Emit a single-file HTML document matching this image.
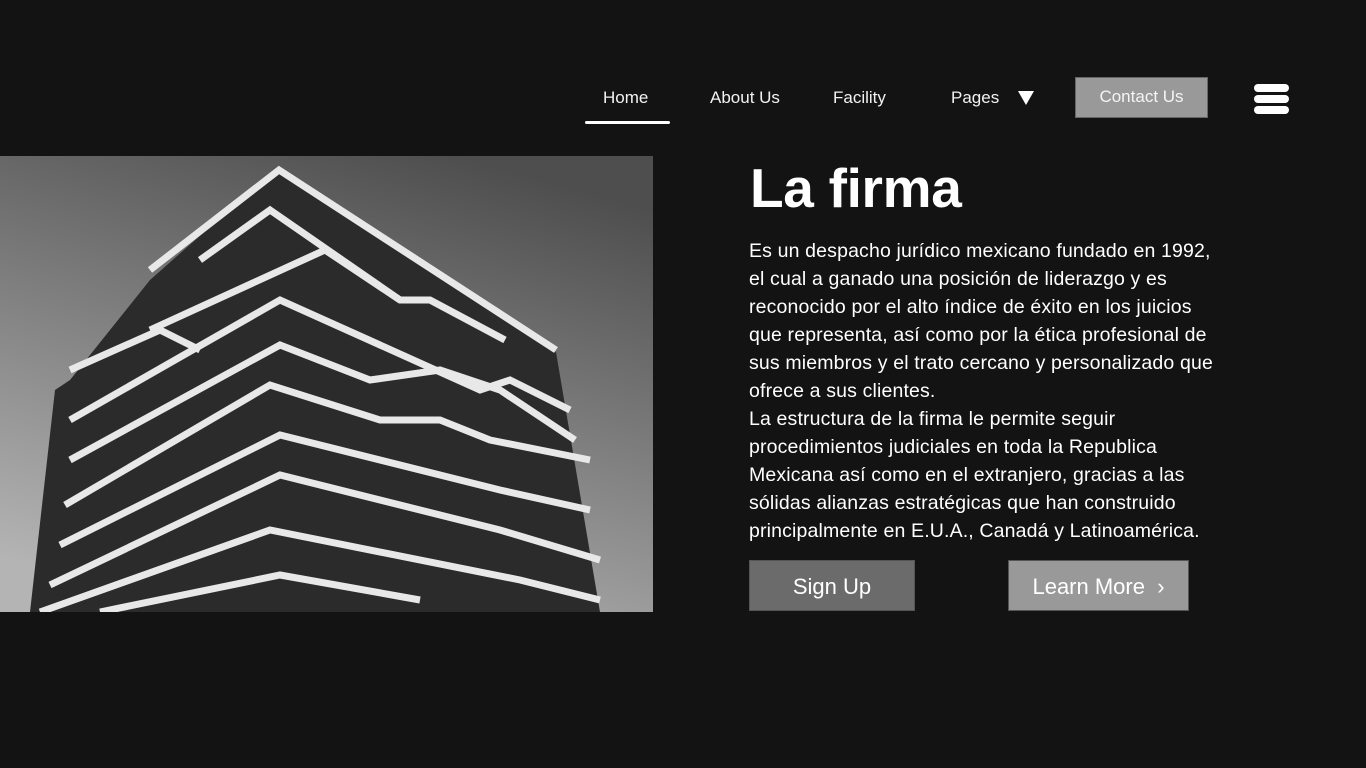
<!DOCTYPE html>
<html><head><meta charset="utf-8"><style>
body{margin:0;width:1366px;height:768px;background:#131313;overflow:hidden;font-family:"Liberation Sans",sans-serif;color:#fff;position:relative}
.nav{position:absolute;top:88px;font-size:17px;color:#f2f2f2}
.ul{position:absolute;left:585px;top:121px;width:85px;height:3px;background:#fff;border-radius:2px}
.contact{position:absolute;left:1075px;top:77px;width:133px;height:41px;background:#999;border:1px solid #666;box-sizing:border-box;font-size:17px;text-align:center;line-height:38px;color:#f4f4f4}
.burger span{position:absolute;left:1254px;width:35px;height:8px;background:#fff;border-radius:4px}
h1{position:absolute;left:750px;top:156px;margin:0;font-size:55px;font-weight:bold;letter-spacing:-0.3px}
.p{position:absolute;left:749px;top:237px;width:520px;font-size:19.5px;line-height:28px;letter-spacing:0.15px;white-space:nowrap}
.btn{position:absolute;top:560px;height:51px;font-size:22px;text-align:center;line-height:51px;box-sizing:border-box;border:1px solid #555}
</style></head><body>
<div class="nav" style="left:603px">Home</div>
<div class="nav" style="left:710px">About Us</div>
<div class="nav" style="left:833px">Facility</div>
<div class="nav" style="left:951px">Pages</div>
<svg style="position:absolute;left:1018px;top:91px" width="16" height="14"><polygon points="0,0 16,0 8,14" fill="#fff"/></svg>
<div class="ul"></div>
<div class="contact">Contact Us</div>
<div class="burger"><span style="top:84px"></span><span style="top:95px"></span><span style="top:106px"></span></div>
<svg style="position:absolute;left:0;top:156px" width="653" height="456" viewBox="0 156 653 456">
<defs><linearGradient id="g" x1="0.7" y1="0" x2="0.3" y2="1"><stop offset="0" stop-color="#4e4e4e"/><stop offset="1" stop-color="#b4b4b4"/></linearGradient></defs>
<rect x="0" y="156" width="653" height="456" fill="url(#g)"/>
<polygon points="279,166 556,352 600,612 30,612 55,390 70,380 150,280" fill="#2b2b2b"/>
<g fill="none" stroke="#e8e8e8" stroke-width="7">
<polyline points="150,270 279,170 556,350"/>
<polyline points="200,260 270,210 400,300"/>
<polyline points="70,370 160,330 200,350"/>
<polyline points="150,330 325,250 400,300 430,300 505,340"/>
<polyline points="70,420 280,300 480,390 510,380 570,410"/>
<polyline points="70,460 280,345 370,380 440,370 500,390 575,440"/>
<polyline points="65,505 270,385 380,420 440,420 490,440 590,460"/>
<polyline points="60,545 280,435 500,490 590,510"/>
<polyline points="50,585 280,475 500,530 600,560"/>
<polyline points="40,612 270,530 520,580 600,600"/>
<polyline points="100,612 280,575 420,600"/>
</g>
</svg>
<h1>La firma</h1>
<div class="p">Es un despacho jurídico mexicano fundado en 1992,<br>el cual a ganado una posición de liderazgo y es<br>reconocido por el alto índice de éxito en los juicios<br>que representa, así como por la ética profesional de<br>sus miembros y el trato cercano y personalizado que<br>ofrece a sus clientes.<br>La estructura de la firma le permite seguir<br>procedimientos judiciales en toda la Republica<br>Mexicana así como en el extranjero, gracias a las<br>sólidas alianzas estratégicas que han construido<br>principalmente en E.U.A., Canadá y Latinoamérica.</div>
<div class="btn" style="left:749px;width:166px;background:#6b6b6b">Sign Up</div>
<div class="btn" style="left:1008px;width:181px;background:#999">Learn More &nbsp;›</div>
</body></html>
